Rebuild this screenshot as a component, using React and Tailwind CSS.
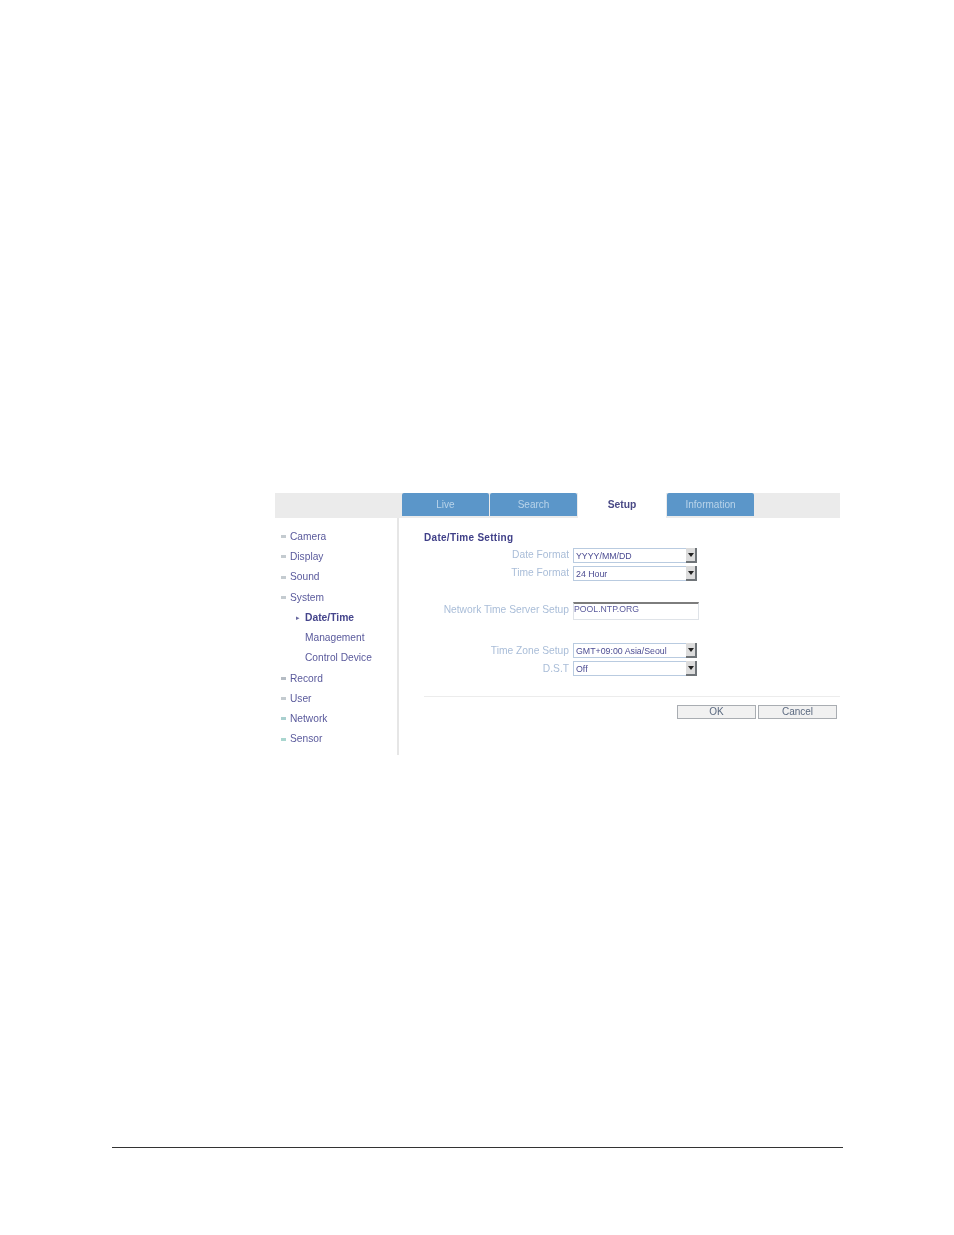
import React from "react";

const menu = [
	{ label: "Camera", marker: "bg-[#c4cbd0]" },
	{ label: "Display", marker: "bg-[#c4cbd0]" },
	{ label: "Sound", marker: "bg-[#c4cbd0]" },
	{ label: "System", marker: "bg-[#c4cbd0]" },
	{ label: "Date/Time", sub: true, active: true },
	{ label: "Management", sub: true },
	{ label: "Control Device", sub: true },
	{ label: "Record", marker: "bg-[#b5bcc4]" },
	{ label: "User", marker: "bg-[#c4cbd0]" },
	{ label: "Network", marker: "bg-[#a9d0cf]" },
	{ label: "Sensor", marker: "bg-[#a9d6cf]" },
];

const Tab = ({ label, active, width }) => (
	<div
		className={
			active
				? "h-[23px] flex items-center justify-center bg-white text-[10.3px] font-bold text-[#4a4a86] " + width
				: "h-[23px] flex items-center justify-center rounded-t-[2px] bg-[#5b96c9] text-[10px] text-[#b9d4ea] " + width
		}
	>
		{label}
	</div>
);

const Select = ({ value }) => (
	<div className="w-[124px] h-[15px] flex items-center border border-[#b9cbe0] bg-white">
		<span className="flex-1 pl-[2px] pt-px text-[8.8px] leading-none text-[#4c4c92] whitespace-nowrap">{value}</span>
		<span className="w-[11px] h-[15px] -mr-px flex items-center justify-center border-r-2 border-b-2 border-[#6f7478] bg-[#dcdcdc]">
			<svg width="6" height="4" viewBox="0 0 6 4">
				<path d="M0 0h6L3 4z" fill="#222" />
			</svg>
		</span>
	</div>
);

const Row = ({ label, children, className = "", raised }) => (
	<div className={"flex items-center " + className}>
		<span
			className={
				"w-[149px] pr-[4px] text-right text-[10.25px] leading-[12px] text-[#a9bdd8] whitespace-nowrap " +
				(raised ? "mb-[2px]" : "")
			}
		>
			{label}
		</span>
		{children}
	</div>
);

const App = () => {
	return (
		<div className="w-[954px] h-[1235px] bg-white flex flex-col font-['Liberation_Sans',Arial,sans-serif]">
			<div className="ml-[275px] mt-[493px] w-[565px] h-[262px] flex flex-col blur-[0.6px]">
				<div className="h-[25px] bg-[#ebebeb] flex items-start pl-[127px] gap-px shrink-0">
					<Tab label="Live" width="w-[87px]" />
					<Tab label="Search" width="w-[87px]" />
					<div className="h-[25px] bg-white">
						<Tab label="Setup" active width="w-[88px]" />
					</div>
					<Tab label="Information" width="w-[87px]" />
				</div>
				<div className="flex flex-1 min-h-0">
					<div className="w-[124px] shrink-0 border-r-2 border-[#e6e6e6] pt-[8.5px]">
						{menu.map((item) => (
							<div key={item.label} className="h-[20.25px] flex items-center">
								{item.sub ? (
									<span className="w-[30px] pl-[21px] text-[7px] leading-none text-[#6a6aa0]">{item.active ? "▸" : ""}</span>
								) : (
									<span className="w-[15px] pl-[6px]">
										<span className={"block w-[5px] h-[3px] " + item.marker}></span>
									</span>
								)}
								<span className={item.active ? "text-[10.3px] font-bold text-[#45458c]" : "text-[10.2px] text-[#5a5a9c]"}>
									{item.label}
								</span>
							</div>
						))}
					</div>
					<div className="flex-1 min-w-0 pl-[25px] pt-[14px]">
						<div className="text-[10px] leading-[11px] font-bold tracking-[0.3px] text-[#3f3f88]">Date/Time Setting</div>
						<div className="mt-[5px]">
							<Row label="Date Format" raised>
								<Select value="YYYY/MM/DD" />
							</Row>
							<Row label="Time Format" raised className="mt-[3px]">
								<Select value="24 Hour" />
							</Row>
							<Row label="Network Time Server Setup" raised className="mt-[21px]">
								<div className="w-[126px] h-[18px] border border-[#dfe3e8] border-t-2 border-t-[#7d7d7d] text-[8.7px] leading-[11px] text-[#5a5a9c]">
									POOL.NTP.ORG
								</div>
							</Row>
							<Row label="Time Zone Setup" className="mt-[23px]">
								<Select value="GMT+09:00 Asia/Seoul" />
							</Row>
							<Row label="D.S.T" className="mt-[3px]">
								<Select value="Off" />
							</Row>
						</div>
						<div className="mt-[20px] border-t border-[#ececec]"></div>
						<div className="mt-[8px] flex justify-end gap-[2px] pr-[3px]">
							<button className="w-[79px] h-[14px] border border-[#a9adb2] bg-[#f1f1f1] text-[10px] leading-none text-[#5c6a80]">OK</button>
							<button className="w-[79px] h-[14px] border border-[#a9adb2] bg-[#f1f1f1] text-[10px] leading-none text-[#5c6a80]">Cancel</button>
						</div>
					</div>
				</div>
			</div>
			<div className="ml-[112px] mt-[392px] w-[731px] border-t border-[#333]"></div>
		</div>
	);
};

export default App;
